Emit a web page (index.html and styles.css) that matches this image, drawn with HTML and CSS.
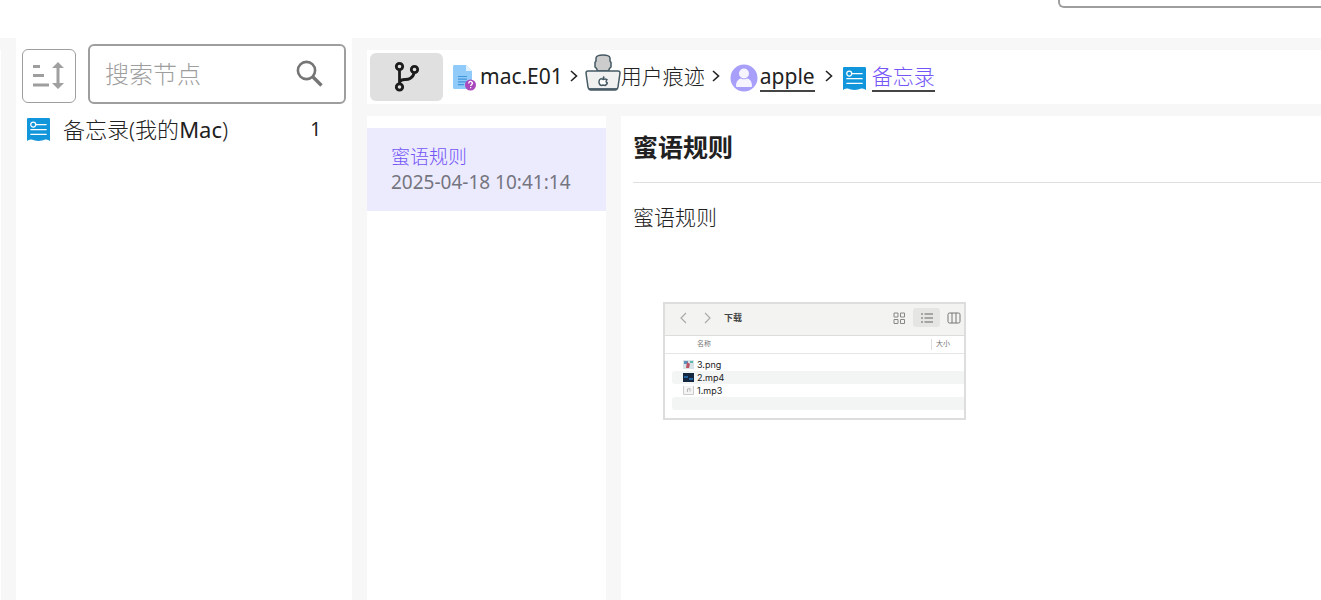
FILE: index.html
```html
<!DOCTYPE html>
<html lang="zh-CN">
<head>
<meta charset="utf-8">
<meta name="viewport" content="width=device-width, initial-scale=1">
<title>备忘录</title>
<link rel="stylesheet" href="styles.css">
</head>
<body>
<svg class="defs" aria-hidden="true">
  <symbol id="memo" viewBox="0 0 24 24">
    <path d="M1.2 0H22.8Q24 0 24 1.2V24Q22 22 19 22.500Q16 24 12 24Q8 24 5 22.500Q2 22 0 24V1.2Q0 0 1.200 0Z" fill="#1296db"/>
    <circle cx="6.500" cy="6.800" r="2.600" fill="none" stroke="#fff" stroke-width="1.300"/>
    <path d="M9.500 6.800H20M4 12.200H20M4 17.200H20" stroke="#fff" stroke-width="1.300" stroke-linecap="round"/>
  </symbol>
  <symbol id="next" viewBox="0 0 10 14"><path d="M2 1L7.500 6L2 11" fill="none" stroke="#222" stroke-width="1.600"/></symbol>
</svg>
<div class="app">
  <header class="top"><input class="top-input" type="text" aria-label="全局搜索"></header>
  <div class="workspace">
    <div class="edge"></div>
    <aside class="tree">
      <div class="tools">
        <button class="sort" type="button" aria-label="排序">
          <svg viewBox="0 0 34 34" width="34" height="34"><path d="M1 7.500H8M1 16.500H12M1 26H17" stroke="#9e9e9e" stroke-width="2.800"/><path d="M26 3L32 9H27.500V24H32L26 30L20 24H24.500V9H20Z" fill="#a0a0a0"/></svg>
        </button>
        <label class="search">
          <input type="text" placeholder="搜索节点" aria-label="搜索节点">
          <svg viewBox="0 0 28 28" width="28" height="28"><circle cx="10.500" cy="10.500" r="8.600" fill="none" stroke="#757575" stroke-width="2.600"/><path d="M16.500 16.500L25.500 25.500" stroke="#757575" stroke-width="3.400"/></svg>
        </label>
      </div>
      <a class="node" href="#memo-node"><svg class="memo"><use href="#memo"/></svg><span>备忘录(我的<span class="latin">Mac</span>)</span><span class="count">1</span></a>
    </aside>
    <main class="main">
      <nav class="crumbs" aria-label="路径">
        <button class="branch" type="button" aria-label="分支视图">
          <svg viewBox="0 0 26 32" width="26" height="32" fill="none" stroke="#1c1c1c" stroke-width="2.800"><circle cx="5.500" cy="5.500" r="3.200"/><circle cx="5.500" cy="26" r="3.200"/><circle cx="20.500" cy="8.500" r="3.200"/><path d="M5.500 9V22.500M5.500 21C8 16.500 12 20 16 17.500Q19.500 15.500 20 12"/></svg>
        </button>
        <a class="crumb file" href="#image">
          <svg viewBox="0 0 24 26" width="24" height="26"><path d="M1.500 0H13L19 6V24H1.500Q0 24 0 22.500V1.500Q0 0 1.500 0Z" fill="#90caf9"/><path d="M13 0V6H19Z" fill="#e1f2fd"/><path d="M5 11.500H14M5 14.200H14M5 16.900H14M5 19.600H11" stroke="#4296dc" stroke-width="1.200"/><circle cx="17.500" cy="20" r="5.500" fill="#ab47bc"/><path d="M15.800 18.500C15.800 15.800 19.400 15.800 19.400 18.300C19.400 19.500 17.600 19.800 17.600 21.100M17.600 22.100V23.300" fill="none" stroke="#fff" stroke-width="1.300"/></svg><span>mac.E01</span>
        </a>
        <svg class="next"><use href="#next"/></svg>
        <a class="crumb traces" href="#traces">
          <svg viewBox="0 0 36 38" width="36" height="38" stroke="#455a64" stroke-width="1.500"><path d="M12.500 17L11.500 14.500L10 13V8.500L11 7V4Q11.500 1 18 1Q24.500 1 25 4V7L26 8.500V13L24.500 14.500L23.500 17Z" fill="#ccc"/><path d="M3 17H33Q35 17 35 19L33 33Q32.500 36 30 36H6Q3.500 36 3 33L1 19Q1 17 3 17Z" fill="#f0f0f0"/><path d="M4 35H32" stroke-width="1.800"/><path d="M18 25.500C13.500 22.500 12.500 31 16.500 31.500L18 31L20 31.500Q22 30.500 22.300 29Q20 27.500 22 25.700Q20.500 24.300 18 25.500ZM18 24.500L19.200 22.500" fill="#fff"/></svg><span>用户痕迹</span>
        </a>
        <svg class="next"><use href="#next"/></svg>
        <a class="crumb user" href="#apple">
          <svg viewBox="0 0 28 28" width="28" height="28"><circle cx="14" cy="14" r="13.500" fill="#a79ff9"/><circle cx="14" cy="9.500" r="5" fill="#f5f4ff"/><path d="M6 22C6 17.500 8.500 15 11 14.500Q14 16.200 17 14.500C20 15 22 17.500 22 22Q22 23 21 23H7Q6 23 6 22Z" fill="#f5f4ff"/></svg><span class="line">apple</span>
        </a>
        <svg class="next"><use href="#next"/></svg>
        <a class="crumb current" href="#memo"><svg class="memo"><use href="#memo"/></svg><span class="line">备忘录</span></a>
      </nav>
      <div class="panes">
        <section class="list"><a class="note" href="#note"><span class="note-title">蜜语规则</span><time>2025-04-18 10:41:14</time></a></section>
        <article class="detail">
          <h1>蜜语规则</h1>
          <p>蜜语规则</p>
          <div class="finder">
            <div class="finder-bar">
              <svg viewBox="0 0 34 12" width="34" height="12"><path d="M8 1L3 6L8 11M27 1L32 6L27 11" fill="none" stroke="#aaa" stroke-width="1.200"/></svg>
              <strong>下载</strong>
              <svg class="grid-icon" viewBox="0 0 12 12" width="12" height="12"><path d="M1 1H5V5H1ZM7.500 1H11.500V5H7.500ZM1 7.500H5V11.500H1ZM7.500 7.500H11.500V11.500H7.500Z" fill="none" stroke="#888"/></svg>
              <span class="list-icon"><svg viewBox="0 0 12 10" width="12" height="10"><path d="M0 1H2M3.500 1H12M0 5H2M3.500 5H12M0 9H2M3.500 9H12" stroke="#666" stroke-width="1.200"/></svg></span>
              <svg viewBox="0 0 14 12" width="14" height="12"><rect x="1" y="1" width="12" height="10" rx="1.500" fill="none" stroke="#777"/><path d="M5 1V11M9 1V11" stroke="#777"/></svg>
            </div>
            <table>
              <thead><tr><th class="name">名称</th><th class="size">大小</th></tr></thead>
              <tbody>
                <tr><td colspan="2"><div class="row"><svg viewBox="0 0 11 9"><rect width="11" height="9" fill="#d8e3e8"/><path d="M1 1H5V4H1Z" fill="#5d91bb"/><path d="M4 2L7 4L6 8H3Z" fill="#bd5265"/><path d="M7 1H10V3H7Z" fill="#5fb6ad"/></svg>3.png</div></td></tr>
                <tr><td colspan="2"><div class="row stripe"><svg viewBox="0 0 11 9"><rect width="11" height="9" fill="#152640"/><path d="M1 3H5V5H1ZM6 5H10V7H6Z" fill="#2465a0"/></svg>2.mp4</div></td></tr>
                <tr><td colspan="2"><div class="row"><svg viewBox="0 0 11 9"><path d="M.5 0V8.500H10.500V0" fill="#f4f4f4" stroke="#ccc"/><path d="M4.500 6V3L7 2.500V5.500" fill="none" stroke="#aaa" stroke-width=".8"/></svg>1.mp3</div></td></tr>
                <tr><td colspan="2"><div class="row stripe"></div></td></tr>
              </tbody>
            </table>
          </div>
        </article>
      </div>
    </main>
  </div>
</div>
</body>
</html>
```
FILE: styles.css
```css
* { box-sizing: border-box; }
body {
  margin: 0;
  background: #f7f7f7;
  color: #212121;
  font-family: "Noto Sans", "Noto Sans CJK SC", sans-serif;
  font-size: 21px;
  font-weight: 300;
}
a { color: inherit; text-decoration: none; }
button { padding: 0; display: flex; align-items: center; justify-content: center; }
svg { flex: none; }
.defs { position: absolute; width: 0; height: 0; }
.app { min-height: 100vh; display: flex; flex-direction: column; overflow: hidden; }
.top { height: 38px; background: #fff; display: flex; justify-content: flex-end; align-items: flex-start; overflow: hidden; }
.top-input { flex: none; width: 20%; min-width: 263px; height: 60px; margin: -52px -1px 0 0; border: 2px solid #9e9e9e; border-right: 0; border-radius: 6px 0 0 6px; background: #fff; }
.workspace { flex: 1; display: flex; }
.edge { width: 1px; margin: 12px 15px 0 0; background: #fff; }
.tree { width: 336px; flex: none; padding: 6px; background: #fff; }
.tools { display: flex; align-items: center; gap: 12px; }
.sort { width: 54px; height: 54px; flex: none; margin-top: 4px; border: 1px solid #9e9e9e; border-radius: 6px; background: #fff; }
.search { flex: 1; min-width: 0; height: 60px; padding: 0 20px 0 15px; display: flex; align-items: center; border: 2px solid #9e9e9e; border-radius: 6px; }
.search input { flex: 1; min-width: 0; height: 48px; padding: 0 0 2px; border: 0; outline: 0; font: inherit; font-size: 24px; background: none; }
.search input::placeholder { color: #9e9e9e; }
.node { display: flex; align-items: center; height: 42px; margin-top: 4px; padding: 0 25px 0 5px; font-size: 22px; line-height: 30px; }
.latin { font-weight: 400; }
.memo { width: 23px; height: 23px; }
.node .memo { margin-right: 13px; }
.node .count { margin-left: auto; font-size: 19px; font-weight: 400; }
.main { flex: 1; min-width: 0; margin-left: 15px; padding-top: 12px; display: flex; flex-direction: column; gap: 12px; }
.crumbs { height: 54px; padding: 0 3px; display: flex; align-items: center; background: #fff; white-space: nowrap; }
.branch { width: 73px; height: 48px; border: 0; border-radius: 6px; background: #e0e0e0; margin-right: 10px; }
.crumb { display: flex; align-items: center; font-weight: 400; line-height: 28px; }
.crumb span { margin-bottom: 2px; }
.file { gap: 3px; }
.file svg, .user svg, .current svg { margin-top: 2px; }
.user { gap: 2px; margin: 0 3px; }
.current { gap: 6px; margin-left: 3px; color: #7455f7; }
.traces span, .current span { font-weight: 300; }
.traces svg { margin-bottom: 8px; }
.crumb .line { margin-bottom: 0; border-bottom: 2px solid #444; }
.next { width: 10px; height: 14px; margin: 0 6px; }
.panes { flex: 1; display: flex; gap: 15px; }
.list { width: 239px; flex: none; padding-top: 12px; background: #fff; }
.note { display: flex; flex-direction: column; height: 83px; padding: 17px 24px; background: #ecebfe; color: #7455f7; font-size: 19px; line-height: 25px; white-space: nowrap; }
.note time { color: #757580; font-weight: 400; }
.detail { flex: 1; min-width: 0; padding: 12px 0 12px 12px; background: #fff; }
h1 { margin: 0; height: 55px; border-bottom: 1px solid #e0e0e0; font-size: 25px; line-height: 38px; font-weight: 700; }
p { margin: 20px 0 71px; line-height: 28px; }
.finder { width: 303px; height: 118px; margin-left: 30px; border: 2px solid #ddd; background: #fff; font-family: Inter, "Noto Sans CJK SC", sans-serif; font-size: 9px; font-weight: 400; }
.finder-bar { height: 32px; padding: 0 3px 4px 13px; display: flex; align-items: center; background: #f3f3f1; border-bottom: 1px solid #ddd; }
.finder-bar strong { margin-left: 12px; color: #444; }
.grid-icon { margin-left: auto; }
.list-icon { width: 27px; height: 19px; margin: 0 7px 0 8px; border-radius: 3px; background: #e5e5e3; display: flex; align-items: center; justify-content: center; }
table { width: 100%; border-collapse: collapse; table-layout: fixed; }
th { height: 17px; padding: 0; border-bottom: 1px solid #e5e5e5; font-size: 7px; line-height: 12px; font-weight: 400; text-align: left; color: #777; }
th.name { padding-left: 32px; }
th.size { width: 33px; padding-left: 5px; background: linear-gradient(#ddd, #ddd) 0 50% / 1px 11px no-repeat; }
td { padding: 0; }
tbody tr:first-child td { padding-top: 4px; }
.row { height: 13px; margin-left: 7px; padding-left: 11px; display: flex; align-items: center; gap: 3px; }
.row svg { width: 11px; height: 9px; }
.stripe { background: #f3f5f4; border-radius: 3px 0 0 3px; }
```
